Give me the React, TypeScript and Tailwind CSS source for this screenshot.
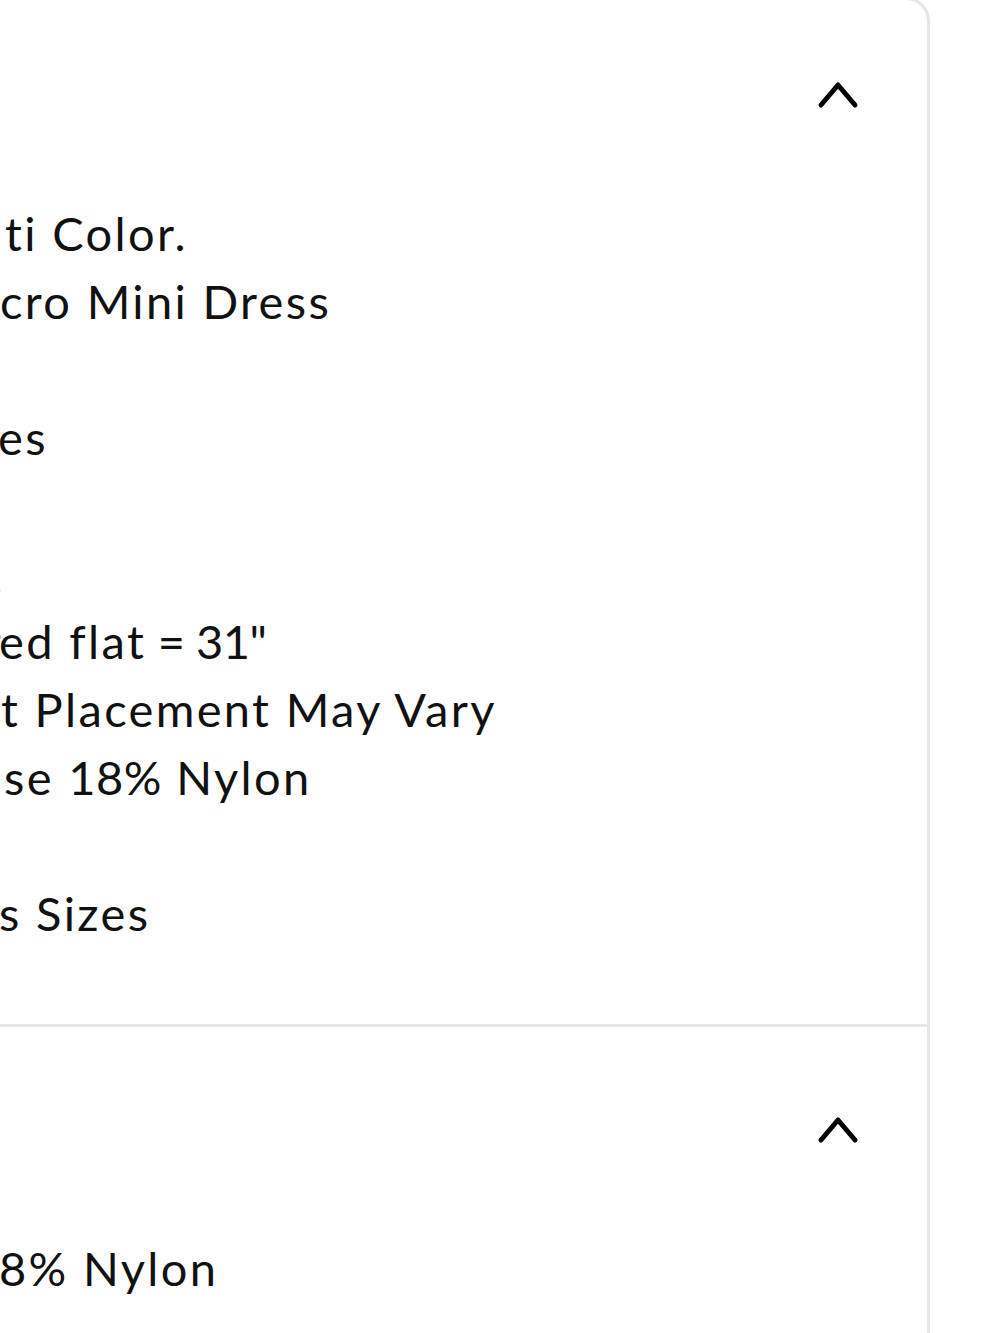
import type { ReactNode } from "react";

type Row = { hidden: string; shown: ReactNode; shift?: string };

const details: Row[] = [
  { hidden: "Available In Mul", shown: "ti Color.", shift: "ml-[2px]" },
  { hidden: "Mesh Mi", shown: "cro Mini Dress", shift: "-ml-[3px]" },
  { hidden: "Long Sleeve", shown: "" },
  { hidden: "Ruched Sid", shown: "es", shift: "-ml-[5px]" },
  { hidden: "Stretch", shown: "" },
  { hidden: "Mock Neck", shown: "" },
  {
    hidden: "Length Measur",
    shown: (
      <>
        ed flat<span className="tracking-[-0.01em]"> = 31"</span>
      </>
    ),
    shift: "-ml-[4px]",
  },
  { hidden: "Prin", shown: "t Placement May Vary", shift: "-ml-[2px]" },
  {
    hidden: "82% Visco",
    shown: (
      <>
        se <span className="tracking-[0.01em]">18%</span> Nylon
      </>
    ),
    shift: "ml-[1px]",
  },
  { hidden: "Imported", shown: "" },
  { hidden: "Also Available In Plu", shown: "s Sizes", shift: "-ml-[4px]" },
];

const care: Row[] = [{ hidden: "82% Viscose 1", shown: "8% Nylon", shift: "-ml-[4px]" }];

function Chevron() {
  return (
    <svg width="42" height="28" viewBox="0 0 42 28" fill="none" stroke="currentColor" strokeWidth={5} strokeLinecap="round" strokeLinejoin="round" className="text-black">
      <polyline points="4,24 21,4 38,24" />
    </svg>
  );
}

function Lines({ rows }: { rows: Row[] }) {
  return (
    <div className="flex flex-col">
      {rows.map((r, i) => (
        <p key={i} className="flex h-[68px] items-center whitespace-nowrap">
          <span className="w-[560px] shrink-0 overflow-hidden text-right">{r.hidden}</span>
          <span className={r.shift}>{r.shown}</span>
        </p>
      ))}
    </div>
  );
}

export default function App() {
  return (
    <div className="w-[1000px] h-[1333px] overflow-hidden bg-white text-[#111] text-[47px] tracking-[0.05em] font-['Lato',sans-serif]">
      <div className="-ml-[600px] -mt-[3px] w-[1530px] border-[3px] border-[#e6e6e6] rounded-tr-[24px] bg-white">
        <section className="border-b-[3px] border-[#e6e6e6]">
          <div className="h-[190px] flex items-center justify-between pl-[40px] pr-[68px]">
            <h3 className="font-bold">Details</h3>
            <Chevron />
          </div>
          <div className="pt-[9px] pb-[77px] pl-[40px]">
            <Lines rows={details} />
          </div>
        </section>
        <section>
          <div className="h-[206px] flex items-center justify-between pl-[40px] pr-[68px]">
            <h3 className="font-bold">Content + Care</h3>
            <Chevron />
          </div>
          <div className="pt-[1px] pb-[40px] pl-[40px]">
            <Lines rows={care} />
          </div>
        </section>
      </div>
    </div>
  );
}
